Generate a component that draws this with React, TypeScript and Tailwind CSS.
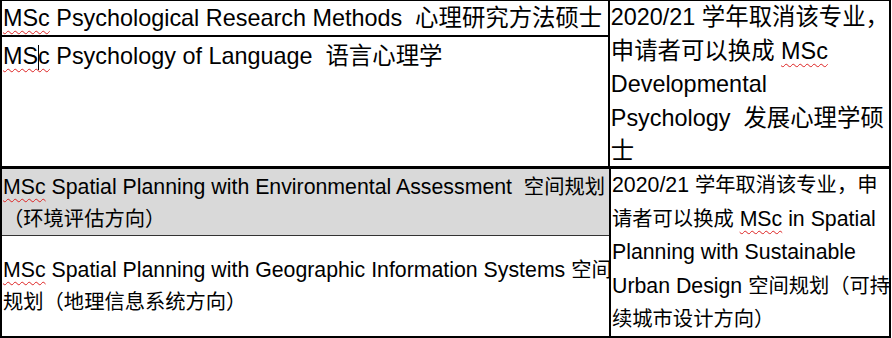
import React from 'react';

const font = { fontFamily: '"Liberation Sans", Arial, "Noto Sans CJK SC", sans-serif' };

// spellcheck squiggle under "MSc"
const Msc: React.FC<{ children?: React.ReactNode }> = ({ children }) => (
  <span className="underline decoration-wavy decoration-[#d22] decoration-1 underline-offset-[4px] [text-decoration-skip-ink:none]">
    {children ?? 'MSc'}
  </span>
);

// Chinese runs in the lower table are set a touch smaller than the latin text
const Zh: React.FC<{ children: React.ReactNode }> = ({ children }) => (
  <span className="text-[20.3px]">{children}</span>
);

export default function App() {
  return (
    <div className="w-[892px] h-[338px] bg-white text-black" style={font}>
      {/* Psychology section */}
      <div className="flex w-[891px] h-[169px] border-t border-b-[3px] border-l-2 border-r-2 border-black">
        <div className="w-[609px] flex flex-col border-r-2 border-black text-[23.4px] leading-[34px]">
          <div className="h-[36px] border-b-2 border-black pl-px whitespace-pre">
            <Msc /> Psychological Research Methods  心理研究方法硕士
          </div>
          <div className="flex-1 pl-px pt-[2px] whitespace-pre">
            <Msc>
              MS
              <span className="inline-block w-px h-[25px] bg-black align-[-6px] -mr-px" />c
            </Msc>{' '}
            Psychology of Language  语言心理学
          </div>
        </div>
        <div className="flex-1 pl-px text-[23.4px] leading-[33.5px] whitespace-pre">
          <div>2020/21 学年取消该专业，</div>
          <div>
            申请者可以换成 <Msc />
          </div>
          <div>Developmental</div>
          <div>Psychology  发展心理学硕</div>
          <div>士</div>
        </div>
      </div>

      {/* Spatial planning section */}
      <div className="flex w-[891px] h-[169px] border-b-2 border-l-2 border-r-2 border-black">
        <div className="w-[609px] flex flex-col border-r-2 border-black text-[21.3px] leading-[32px]">
          <div className="h-[67px] bg-[#d9d9d9] border-b border-[#333] pl-px pt-[2px] whitespace-pre">
            <div>
              <Msc /> Spatial Planning with Environmental Assessment  <Zh>空间规划</Zh>
            </div>
            <div>
              <Zh>（环境评估方向）</Zh>
            </div>
          </div>
          <div className="flex-1 flex flex-col justify-center pl-px whitespace-pre">
            <div>
              <Msc /> Spatial Planning with Geographic Information Systems <Zh>空间</Zh>
            </div>
            <div>
              <Zh>规划（地理信息系统方向）</Zh>
            </div>
          </div>
        </div>
        <div className="flex-1 pl-px text-[21.3px] leading-[33.5px] whitespace-pre">
          <div>
            2020/21 <Zh>学年取消该专业，申</Zh>
          </div>
          <div>
            <Zh>请者可以换成</Zh> <Msc /> in Spatial
          </div>
          <div>Planning with Sustainable</div>
          <div>
            Urban Design <Zh>空间规划（可持</Zh>
          </div>
          <div>
            <Zh>续城市设计方向）</Zh>
          </div>
        </div>
      </div>
    </div>
  );
}
